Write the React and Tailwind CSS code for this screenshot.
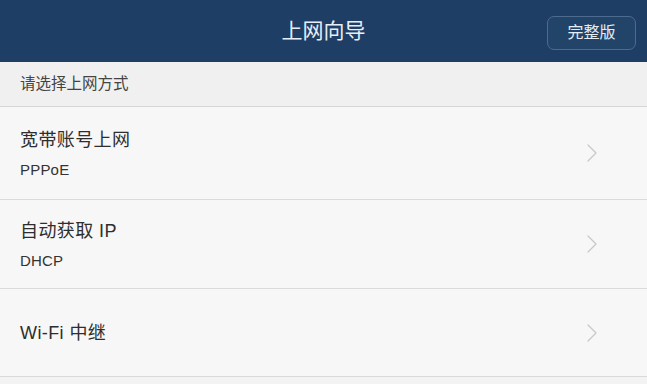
import React from "react";

const font = { fontFamily: '"Liberation Sans", "Noto Sans CJK SC", sans-serif' };

function Chevron() {
  return (
    <svg width="12" height="20" viewBox="0 0 12 20" className="shrink-0">
      <path d="M2 2 L10 10 L2 18" fill="none" stroke="#c8c8c8" strokeWidth="1.2" strokeLinecap="round" strokeLinejoin="round" />
    </svg>
  );
}

function Row({ title, sub, h }) {
  return (
    <div className={`flex items-center justify-between border-b border-[#dadada] bg-[#f7f7f7] pl-5 pr-[49px] ${h}`}>
      <div className={`flex flex-col ${sub ? "pt-[2px]" : ""}`}>
        <div className="text-[18px] leading-[24px] tracking-[0.4px] text-[#2e2e2e]">{title}</div>
        {sub && <div className="mt-[8px] text-[15px] leading-[20px] tracking-[0.2px] text-[#333]">{sub}</div>}
      </div>
      <Chevron />
    </div>
  );
}

export default function App() {
  return (
    <div className="w-[647px] h-[384px] overflow-hidden bg-[#f3f3f3]" style={font}>
      <div className="relative flex h-[62px] items-center justify-center bg-[#1e3e66]">
        <div className="text-[21px] text-[#e8eef6]">上网向导</div>
        <div className="absolute right-[11px] top-[16px] flex h-[34px] w-[89px] items-center justify-center rounded-[7px] border border-[#4d6b8f] bg-[#234469] text-[16px] text-[#e6ecf4]">
          完整版
        </div>
      </div>
      <div className="flex h-[45px] items-center border-b border-[#d6d6d6] bg-[#f0f0f0] pl-5 text-[15.5px] text-[#444]">
        请选择上网方式
      </div>
      <Row title="宽带账号上网" sub="PPPoE" h="h-[93px]" />
      <Row title="自动获取 IP" sub="DHCP" h="h-[89px]" />
      <Row title="Wi-Fi 中继" h="h-[88px]" />
    </div>
  );
}
